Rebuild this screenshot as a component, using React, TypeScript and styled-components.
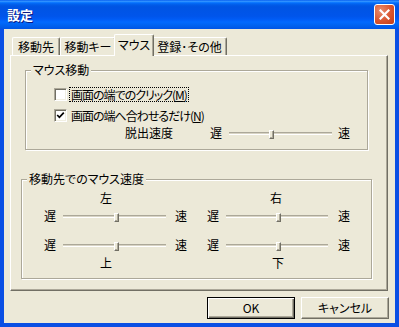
import styled, { createGlobalStyle } from 'styled-components';

const face = '#ECE9D8';
const shadow = '#ACA899';
const dark = '#716F64';

const GlobalStyle = createGlobalStyle`
  html, body {
    margin: 0;
    padding: 0;
    background: #fff;
  }
  body {
    font-family: "Noto Sans CJK JP", "Liberation Sans", sans-serif;
    font-size: 12px;
    font-feature-settings: "palt";
  }
`;

const Window = styled.div`
  width: 399px;
  height: 327px;
  display: flex;
  flex-direction: column;
  color: #000;
`;

const TitleBar = styled.div`
  height: 29px;
  flex: none;
  display: flex;
  align-items: center;
  justify-content: space-between;
  padding: 0 4px 0 7px;
  box-sizing: border-box;
  background: linear-gradient(
    180deg,
    #0058ee 0%,
    #3593ff 4%,
    #288eff 6%,
    #127dff 8%,
    #036ffc 10%,
    #0262ee 14%,
    #0057e5 20%,
    #0054e3 24%,
    #0055eb 56%,
    #005bf5 66%,
    #026afe 76%,
    #0062ef 88%,
    #0055e5 100%
  );
`;

const Title = styled.span`
  color: #fff;
  font-weight: bold;
  font-size: 13px;
  line-height: 16px;
  text-shadow: 1px 1px 0 #0a1883;
`;

const CloseButton = styled.div`
  width: 21px;
  height: 21px;
  box-sizing: border-box;
  border: 1px solid #fff;
  border-radius: 3px;
  background: radial-gradient(circle at 30% 30%, #e88d6f 0%, #d9552f 55%, #c23d15 100%);
  display: flex;
  align-items: center;
  justify-content: center;
`;

const Body = styled.div`
  flex: 1;
  display: flex;
  flex-direction: column;
  background: ${face};
  border: 4px solid #0a4fe4;
  border-top: none;
  padding: 5px 7px 0 6px;
  box-sizing: border-box;
`;

const TabStrip = styled.div`
  display: flex;
  align-items: flex-end;
  height: 21px;
  padding-left: 2px;
  position: relative;
  z-index: 1;
`;

const Tab = styled.div<{ $w: number; $active?: boolean }>`
  width: ${(p) => p.$w}px;
  height: ${(p) => (p.$active ? 22 : 18)}px;
  margin: ${(p) => (p.$active ? '0 -2px -1px' : '0')};
  position: relative;
  z-index: ${(p) => (p.$active ? 2 : 1)};
  box-sizing: border-box;
  background: ${face};
  border-top: 1px solid #fff;
  border-left: 1px solid #fff;
  border-right: 1px solid ${dark};
  border-radius: 2px 2px 0 0;
  box-shadow: inset -1px 0 0 ${shadow};
  display: flex;
  align-items: ${(p) => (p.$active ? 'flex-start' : 'center')};
  padding-top: ${(p) => (p.$active ? 3 : 0)}px;
  justify-content: center;
  line-height: 14px;
  white-space: nowrap;
`;

const Panel = styled.div`
  height: 236px;
  box-sizing: border-box;
  border: 1px solid;
  border-color: #fff ${dark} ${dark} #fff;
  box-shadow: inset -1px -1px 0 ${shadow};
  display: flex;
  flex-direction: column;
`;

const GroupBox = styled.div<{ $margin: string; $h: number; $pt: number }>`
  position: relative;
  margin: ${(p) => p.$margin};
  height: ${(p) => p.$h}px;
  box-sizing: border-box;
  border: 1px solid ${shadow};
  box-shadow: inset 1px 1px 0 #fff, 1px 1px 0 #fff;
  padding-top: ${(p) => p.$pt}px;
`;

const GroupTitle = styled.span`
  position: absolute;
  top: -8px;
  left: 5px;
  padding: 0 2px;
  background: ${face};
  line-height: 14px;
  white-space: nowrap;
`;

const CheckRow = styled.label`
  height: 21px;
  display: flex;
  align-items: center;
  padding-left: 28px;
`;

const CheckBox = styled.span`
  width: 13px;
  height: 13px;
  box-sizing: border-box;
  background: #fff;
  border: 1px solid;
  border-color: ${shadow} #fff #fff ${shadow};
  box-shadow: inset 1px 1px 0 ${dark}, inset -1px -1px 0 #f1efe2;
  display: flex;
  align-items: center;
  justify-content: center;
`;

const CheckText = styled.span<{ $focus?: boolean }>`
  margin-left: 3px;
  padding: 0 1px;
  line-height: 13px;
  letter-spacing: -1px;
  white-space: nowrap;
  outline: ${(p) => (p.$focus ? '1px dotted #000' : 'none')};
  outline-offset: 0;
`;

const SliderRow = styled.div`
  height: 14px;
  display: flex;
  align-items: center;
  padding-left: 99px;
`;

const RowLabel = styled.span`
  width: 85px;
  line-height: 14px;
  white-space: nowrap;
`;

const SliderWrap = styled.div<{ $mt?: number }>`
  display: flex;
  align-items: center;
  height: 14px;
  margin-top: ${(p) => p.$mt ?? 0}px;
`;

const SpeedChar = styled.span`
  width: 12px;
  line-height: 14px;
  text-align: center;
`;

const Track = styled.div<{ $w: number; $trail: number }>`
  position: relative;
  width: ${(p) => p.$w}px;
  height: 3px;
  margin: 1px ${(p) => p.$trail}px 0 7px;
  box-sizing: border-box;
  border-top: 1px solid ${shadow};
  border-bottom: 1px solid #fff;
  background: #d8d4c4;
`;

const Thumb = styled.div`
  position: absolute;
  top: -3px;
  width: 5px;
  height: 9px;
  margin-left: -2px;
  box-sizing: border-box;
  background: ${face};
  border: 1px solid;
  border-color: #fff ${dark} ${dark} #fff;
  box-shadow: inset -1px -1px 0 ${shadow};
`;

const Columns = styled.div`
  display: flex;
  gap: 20px;
  padding-left: 22px;
`;

const Column = styled.div`
  display: flex;
  flex-direction: column;
`;

const DirLabel = styled.span<{ $offset: number; $mt: number }>`
  padding-left: ${(p) => p.$offset}px;
  margin-top: ${(p) => p.$mt}px;
  line-height: 14px;
  height: 14px;
`;

const Footer = styled.div`
  display: flex;
  justify-content: flex-end;
  gap: 6px;
  margin: 6px -1px 0 0;
`;

const Button = styled.div<{ $default?: boolean }>`
  width: 88px;
  height: 22px;
  box-sizing: border-box;
  background: ${face};
  display: flex;
  align-items: center;
  justify-content: center;
  line-height: 14px;
  border: 1px solid;
  border-color: ${(p) => (p.$default ? '#000' : `#fff ${dark} ${dark} #fff`)};
  box-shadow: ${(p) =>
    p.$default
      ? `inset 1px 1px 0 #fff, inset -1px -1px 0 ${dark}, inset -2px -2px 0 ${shadow}`
      : `inset -1px -1px 0 ${shadow}`};
`;

const Slider = ({ value, w = 103, trail = 9, mt }: { value: number; w?: number; trail?: number; mt?: number }) => (
  <SliderWrap $mt={mt}>
    <SpeedChar>遅</SpeedChar>
    <Track $w={w} $trail={trail}>
      <Thumb style={{ left: `${value}%` }} />
    </Track>
    <SpeedChar>速</SpeedChar>
  </SliderWrap>
);

const Check = () => (
  <svg width="9" height="9" viewBox="0 0 9 9">
    <path d="M1.2 4 L3.4 6.3 L7.8 1.6" fill="none" stroke="#000" strokeWidth="1.7" />
  </svg>
);

export default function App() {
  return (
    <>
      <GlobalStyle />
      <Window>
        <TitleBar>
          <Title>設定</Title>
          <CloseButton>
            <svg width="11" height="11" viewBox="0 0 11 11">
              <path d="M1.5 1.5 L9.5 9.5 M9.5 1.5 L1.5 9.5" stroke="#fff" strokeWidth="2.2" strokeLinecap="square" />
            </svg>
          </CloseButton>
        </TitleBar>
        <Body>
          <TabStrip>
            <Tab $w={48}>移動先</Tab>
            <Tab $w={56}>移動キー</Tab>
            <Tab $w={40} $active>
              マウス
            </Tab>
            <Tab $w={75}>登録･その他</Tab>
          </TabStrip>
          <Panel>
            <GroupBox $margin="14px 19px 0 14px" $h={80} $pt={13}>
              <GroupTitle>マウス移動</GroupTitle>
              <CheckRow>
                <CheckBox />
                <CheckText $focus>
                  画面の端でのクリック(<u>M</u>)
                </CheckText>
              </CheckRow>
              <CheckRow>
                <CheckBox>
                  <Check />
                </CheckBox>
                <CheckText>
                  画面の端へ合わせるだけ(<u>N</u>)
                </CheckText>
              </CheckRow>
              <SliderRow>
                <RowLabel>脱出速度</RowLabel>
                <Slider value={41} trail={6} />
              </SliderRow>
            </GroupBox>
            <GroupBox $margin="29px 15px 0 10px" $h={100} $pt={11}>
              <GroupTitle>移動先でのマウス速度</GroupTitle>
              <Columns>
                <Column>
                  <DirLabel $offset={56} $mt={0}>左</DirLabel>
                  <Slider value={51} mt={4} />
                  <Slider value={51} mt={15} />
                  <DirLabel $offset={56} $mt={4}>上</DirLabel>
                </Column>
                <Column>
                  <DirLabel $offset={63} $mt={0}>右</DirLabel>
                  <Slider value={51} w={102} trail={10} mt={4} />
                  <Slider value={51} w={102} trail={10} mt={15} />
                  <DirLabel $offset={65} $mt={4}>下</DirLabel>
                </Column>
              </Columns>
            </GroupBox>
          </Panel>
          <Footer>
            <Button $default>OK</Button>
            <Button>キャンセル</Button>
          </Footer>
        </Body>
      </Window>
    </>
  );
}
